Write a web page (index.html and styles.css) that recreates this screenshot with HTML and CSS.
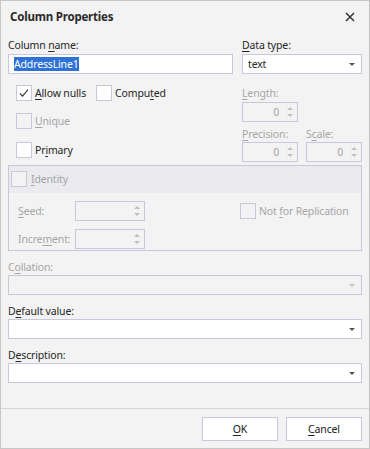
FILE: index.html
```html
<!DOCTYPE html>
<html lang="en">
<head>
    <meta charset="UTF-8">
    <title>Column Properties</title>
    <link rel="stylesheet" href="styles.css">
</head>
<body>
    <div class="dialog">
        <div class="titlebar">
            <span class="title">Column Properties</span>
            <svg class="close" width="10" height="10" viewBox="0 0 10 10">
                <path d="M1 1 L9 9 M9 1 L1 9" stroke="#333" stroke-width="1.5" fill="none"/>
            </svg>
        </div>

        <div class="content">
            <div class="row-top">
                <div class="field field-name">
                    <div class="label">Column <u>n</u>ame:</div>
                    <div class="textbox"><span class="caret"></span><span class="selected">AddressLine1</span></div>
                </div>
                <div class="field field-type">
                    <div class="label"><u>D</u>ata type:</div>
                    <div class="combo"><span>text</span><i class="arrow"></i></div>
                </div>
            </div>

            <div class="row-mid">
                <div class="checks">
                    <div class="check-row">
                        <div class="check">
                            <span class="box">
                                <svg width="14" height="14" viewBox="0 0 14 14"><path d="M3 7.5 L5.6 10.2 L11 3.5" stroke="#333" stroke-width="1.1" fill="none"/></svg>
                            </span>
                            <span><u>A</u>llow nulls</span>
                        </div>
                        <div class="check">
                            <span class="box"></span>
                            <span>Compu<u>t</u>ed</span>
                        </div>
                    </div>
                    <div class="check-row">
                        <div class="check disabled">
                            <span class="box"></span>
                            <span><u>U</u>nique</span>
                        </div>
                    </div>
                    <div class="check-row">
                        <div class="check">
                            <span class="box"></span>
                            <span>Pr<u>i</u>mary</span>
                        </div>
                    </div>
                </div>

                <div class="sizes">
                    <div class="label disabled len-label"><u>L</u>ength:</div>
                    <div class="spin disabled"><span class="val">0</span><i class="updown"></i></div>
                    <div class="size-pair">
                        <div class="size-col">
                            <div class="label disabled"><u>P</u>recision:</div>
                            <div class="spin disabled"><span class="val">0</span><i class="updown"></i></div>
                        </div>
                        <div class="size-col">
                            <div class="label disabled">S<u>c</u>ale:</div>
                            <div class="spin disabled"><span class="val">0</span><i class="updown"></i></div>
                        </div>
                    </div>
                </div>
            </div>

            <div class="group">
                <div class="group-head">
                    <div class="check disabled">
                        <span class="box"></span>
                        <span><u>I</u>dentity</span>
                    </div>
                </div>
                <div class="group-body">
                    <div class="id-fields">
                        <div class="id-row">
                            <span class="id-label disabled"><u>S</u>eed:</span>
                            <div class="spin disabled wide"><span class="val"></span><i class="updown"></i></div>
                        </div>
                        <div class="id-row">
                            <span class="id-label disabled">Incre<u>m</u>ent:</span>
                            <div class="spin disabled wide"><span class="val"></span><i class="updown"></i></div>
                        </div>
                    </div>
                    <div class="check disabled repl">
                        <span class="box"></span>
                        <span>Not <u>f</u>or Replication</span>
                    </div>
                </div>
            </div>

            <div class="field wide-field">
                <div class="label disabled">C<u>o</u>llation:</div>
                <div class="combo disabled"><span></span><i class="arrow"></i></div>
            </div>
            <div class="field wide-field">
                <div class="label">D<u>e</u>fault value:</div>
                <div class="combo"><span></span><i class="arrow"></i></div>
            </div>
            <div class="field wide-field">
                <div class="label">D<u>e</u>scription:</div>
                <div class="combo"><span></span><i class="arrow"></i></div>
            </div>
        </div>

        <div class="footer">
            <button class="btn"><u>O</u>K</button>
            <button class="btn"><u>C</u>ancel</button>
        </div>
    </div>
</body>
</html>
```

FILE: styles.css
```css
body {
    margin: 0;
    font-family: "Noto Sans", "Open Sans", sans-serif;
    font-size: 10.5px;
    letter-spacing: -0.15px;
    color: #262626;
}
u {
    text-decoration-thickness: 1px;
    text-underline-offset: 2px;
}
.dialog {
    width: 370px;
    height: 449px;
    box-sizing: border-box;
    border: 1px solid #c6c6c6;
    background-color: #f3f3f3;
    display: flex;
    flex-direction: column;
}
.titlebar {
    height: 30px;
    display: flex;
    align-items: center;
    justify-content: space-between;
    padding: 0 14px 0 9px;
}
.title {
    font-weight: bold;
    font-size: 11.5px;
    letter-spacing: -0.2px;
    color: #2a2a2a;
}
.close {
    margin-top: 1px;
}
.content {
    padding: 7px 7px 0 7px;
}
.label {
    height: 14px;
    line-height: 14px;
    margin-bottom: 2px;
    white-space: nowrap;
}
.disabled {
    color: #a6a6a6;
}
.row-top {
    display: flex;
    gap: 9px;
}
.field-name {
    width: 225px;
}
.field-type {
    flex: 1;
}
.textbox, .combo {
    height: 20px;
    box-sizing: border-box;
    border: 1px solid #c8c8dc;
    background-color: #fff;
    display: flex;
    align-items: center;
    padding-left: 5px;
    position: relative;
}
.caret {
    width: 1px;
    height: 14px;
    background-color: #202020;
    margin-right: -1px;
}
.selected {
    background-color: #2f72d6;
    color: #fff;
    line-height: 14px;
}
.combo span {
    flex: 1;
}
.combo.disabled {
    background-color: #f3f3f3;
}
.arrow {
    width: 0;
    height: 0;
    border-left: 3px solid transparent;
    border-right: 3px solid transparent;
    border-top: 3px solid #555;
    margin-right: 6px;
}
.combo.disabled .arrow {
    border-top-color: #c4c4c4;
}

/* checkboxes */
.row-mid {
    display: flex;
    justify-content: space-between;
}
.checks {
    padding: 11px 0 0 8px;
}
.check-row {
    display: flex;
    gap: 0 10px;
    height: 28px;
}
.check-row:nth-child(2) {
    height: 29px;
}
.check-row:last-child {
    height: 16px;
}
.check {
    display: flex;
    align-items: flex-start;
    gap: 3px;
    white-space: nowrap;
}
.check span:last-child {
    line-height: 16px;
}
.box {
    width: 16px;
    height: 16px;
    box-sizing: border-box;
    border: 1px solid #c8c8dc;
    background-color: #fff;
    display: flex;
    align-items: center;
    justify-content: center;
}
.check.disabled .box {
    background-color: #f3f3f3;
}

/* spinners */
.sizes {
    width: 120px;
}
.len-label {
    margin-top: 12px;
}
.spin {
    width: 56px;
    height: 20px;
    box-sizing: border-box;
    border: 1px solid #c8c8dc;
    display: flex;
    align-items: center;
}
.spin .val {
    flex: 1;
    text-align: right;
    padding-right: 5px;
}
.updown {
    width: 13px;
    height: 12px;
    position: relative;
}
.updown::before, .updown::after {
    content: "";
    position: absolute;
    left: 3px;
    border-left: 3px solid transparent;
    border-right: 3px solid transparent;
}
.updown::before {
    top: 1px;
    border-bottom: 3px solid #c0c0c0;
}
.updown::after {
    bottom: 1px;
    border-top: 3px solid #c0c0c0;
}
.size-pair {
    display: flex;
    justify-content: space-between;
    margin-top: 5px;
}
.size-pair .label {
    margin-bottom: 1px;
}

/* identity group */
.group {
    margin-top: 3px;
    border: 1px solid #c8c8dc;
    height: 86px;
    box-sizing: border-box;
}
.group-head {
    height: 27px;
    background-color: #eaeaef;
    padding: 5px 0 0 2px;
    box-sizing: border-box;
}
.group-head .check {
    gap: 4px;
}
.group-body {
    display: flex;
    padding: 8px 0 0 9px;
}
.id-fields {
    display: flex;
    flex-direction: column;
    gap: 8px;
}
.id-row {
    display: flex;
    align-items: center;
}
.id-label {
    width: 57px;
}
.spin.wide {
    width: 70px;
}
.repl {
    margin: 2px 0 0 95px;
}

.wide-field {
    margin-top: 9px;
}
.wide-field .label {
    margin-bottom: 1px;
}

/* footer */
.footer {
    margin-top: auto;
    border-top: 1px solid #d4d4de;
    padding: 8px 7px 7px 0;
    display: flex;
    justify-content: flex-end;
    gap: 8px;
}
.btn {
    width: 76px;
    height: 24px;
    background-color: #fff;
    border: 1px solid #c8c8dc;
    font-family: inherit;
    font-size: 10.5px;
    letter-spacing: -0.15px;
    color: #202020;
    padding: 0;
}
```
